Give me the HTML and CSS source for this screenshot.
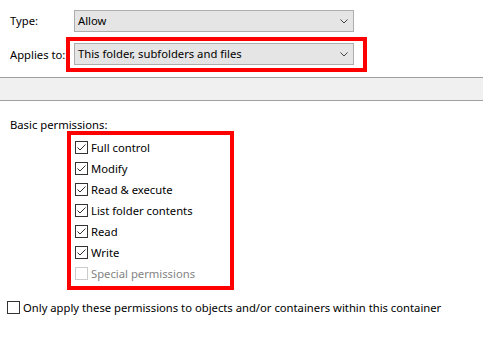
FILE: index.html
```html
<!DOCTYPE html>
<html lang="en">
  <head>
    <meta charset="UTF-8" />
    <meta name="viewport" content="width=device-width, initial-scale=1.0" />
    <title>Permission Entry</title>
    <link rel="stylesheet" href="styles.css">
  </head>
  <body>
    <div class="dialog">
      <!-- Type / Applies to -->
      <div class="fields">
        <span class="field-label">Type:</span>
        <div class="combo">
          <span class="combo-text">Allow</span>
          <svg class="chevron" width="8" height="5" viewBox="0 0 8 5"><polyline points="0.5,0.5 4,4 7.5,0.5" /></svg>
        </div>

        <span class="field-label">Applies to:</span>
        <div class="highlight highlight-combo">
          <div class="combo">
            <span class="combo-text">This folder, subfolders and files</span>
            <svg class="chevron" width="8" height="5" viewBox="0 0 8 5"><polyline points="0.5,0.5 4,4 7.5,0.5" /></svg>
          </div>
        </div>
      </div>

      <div class="band"></div>

      <!-- Basic permissions -->
      <div class="perms">
        <p class="perms-title">Basic permissions:</p>
        <div class="highlight highlight-list">
          <ul class="perm-list">
            <li class="perm"><span class="box checked"><svg width="11" height="11" viewBox="0 0 11 11"><polyline points="1.5,5.5 4,8 9.5,2.5" /></svg></span>Full control</li>
            <li class="perm"><span class="box checked"><svg width="11" height="11" viewBox="0 0 11 11"><polyline points="1.5,5.5 4,8 9.5,2.5" /></svg></span>Modify</li>
            <li class="perm"><span class="box checked"><svg width="11" height="11" viewBox="0 0 11 11"><polyline points="1.5,5.5 4,8 9.5,2.5" /></svg></span>Read &amp; execute</li>
            <li class="perm"><span class="box checked"><svg width="11" height="11" viewBox="0 0 11 11"><polyline points="1.5,5.5 4,8 9.5,2.5" /></svg></span>List folder contents</li>
            <li class="perm"><span class="box checked"><svg width="11" height="11" viewBox="0 0 11 11"><polyline points="1.5,5.5 4,8 9.5,2.5" /></svg></span>Read</li>
            <li class="perm"><span class="box checked"><svg width="11" height="11" viewBox="0 0 11 11"><polyline points="1.5,5.5 4,8 9.5,2.5" /></svg></span>Write</li>
            <li class="perm disabled"><span class="box"></span>Special permissions</li>
          </ul>
        </div>

        <div class="perm only"><span class="box"></span>Only apply these permissions to objects and/or containers within this container</div>
      </div>
    </div>
  </body>
</html>
```

FILE: styles.css
```css
/* global */
body {
  margin: 0;
  background: #ffffff;
  color: #000000;
  font-family: "Noto Sans", "Open Sans", sans-serif;
  font-size: 11.25px;
}

.dialog {
  width: 483px;
}

/* top fields */
.fields {
  display: grid;
  grid-template-columns: 64px auto;
  justify-content: start;
  align-items: center;
  row-gap: 5px;
  padding: 10px 0 5px 10px;
}

.field-label {
  line-height: 16px;
  white-space: nowrap;
}

.combo {
  box-sizing: border-box;
  width: 280px;
  height: 22px;
  display: flex;
  align-items: center;
  justify-content: space-between;
  padding: 0 5px 0 3px;
  background: #e5e5e5;
  border: 1px solid #adadad;
}

.combo-text {
  line-height: 16px;
}

.chevron polyline {
  fill: none;
  stroke: #444444;
  stroke-width: 1;
}

/* red annotation frames */
.highlight {
  border: 4px solid #ff0000;
  box-sizing: border-box;
}

.highlight-combo {
  justify-self: start;
  margin-left: -8px;
  padding: 2px 9px 3px 4px;
}

.highlight-list {
  width: 167px;
  margin: -1px 0 0 57px;
  padding: 2px 0 2px 4px;
}

/* grey separator band */
.band {
  height: 22px;
  background: #f0f0f0;
  border-top: 1px solid #a0a0a0;
  border-bottom: 1px solid #a0a0a0;
}

/* permissions */
.perms {
  padding: 0 0 0 10px;
}

.perms-title {
  margin: 17px 0 0 0;
  line-height: 14px;
}

.perm-list {
  list-style: none;
  margin: 0;
  padding: 0;
}

.perm {
  display: flex;
  align-items: center;
  height: 21px;
  white-space: nowrap;
}

.box {
  box-sizing: border-box;
  width: 13px;
  height: 13px;
  margin-right: 3px;
  border: 1px solid #333333;
  background: #ffffff;
  flex-shrink: 0;
}

.box svg {
  display: block;
}

.box polyline {
  fill: none;
  stroke: #333333;
  stroke-width: 1;
}

.perm.disabled {
  color: #838383;
}

.perm.disabled .box {
  border-color: #cccccc;
}

.perm.only {
  margin: 7px 0 0 -3px;
}
```
